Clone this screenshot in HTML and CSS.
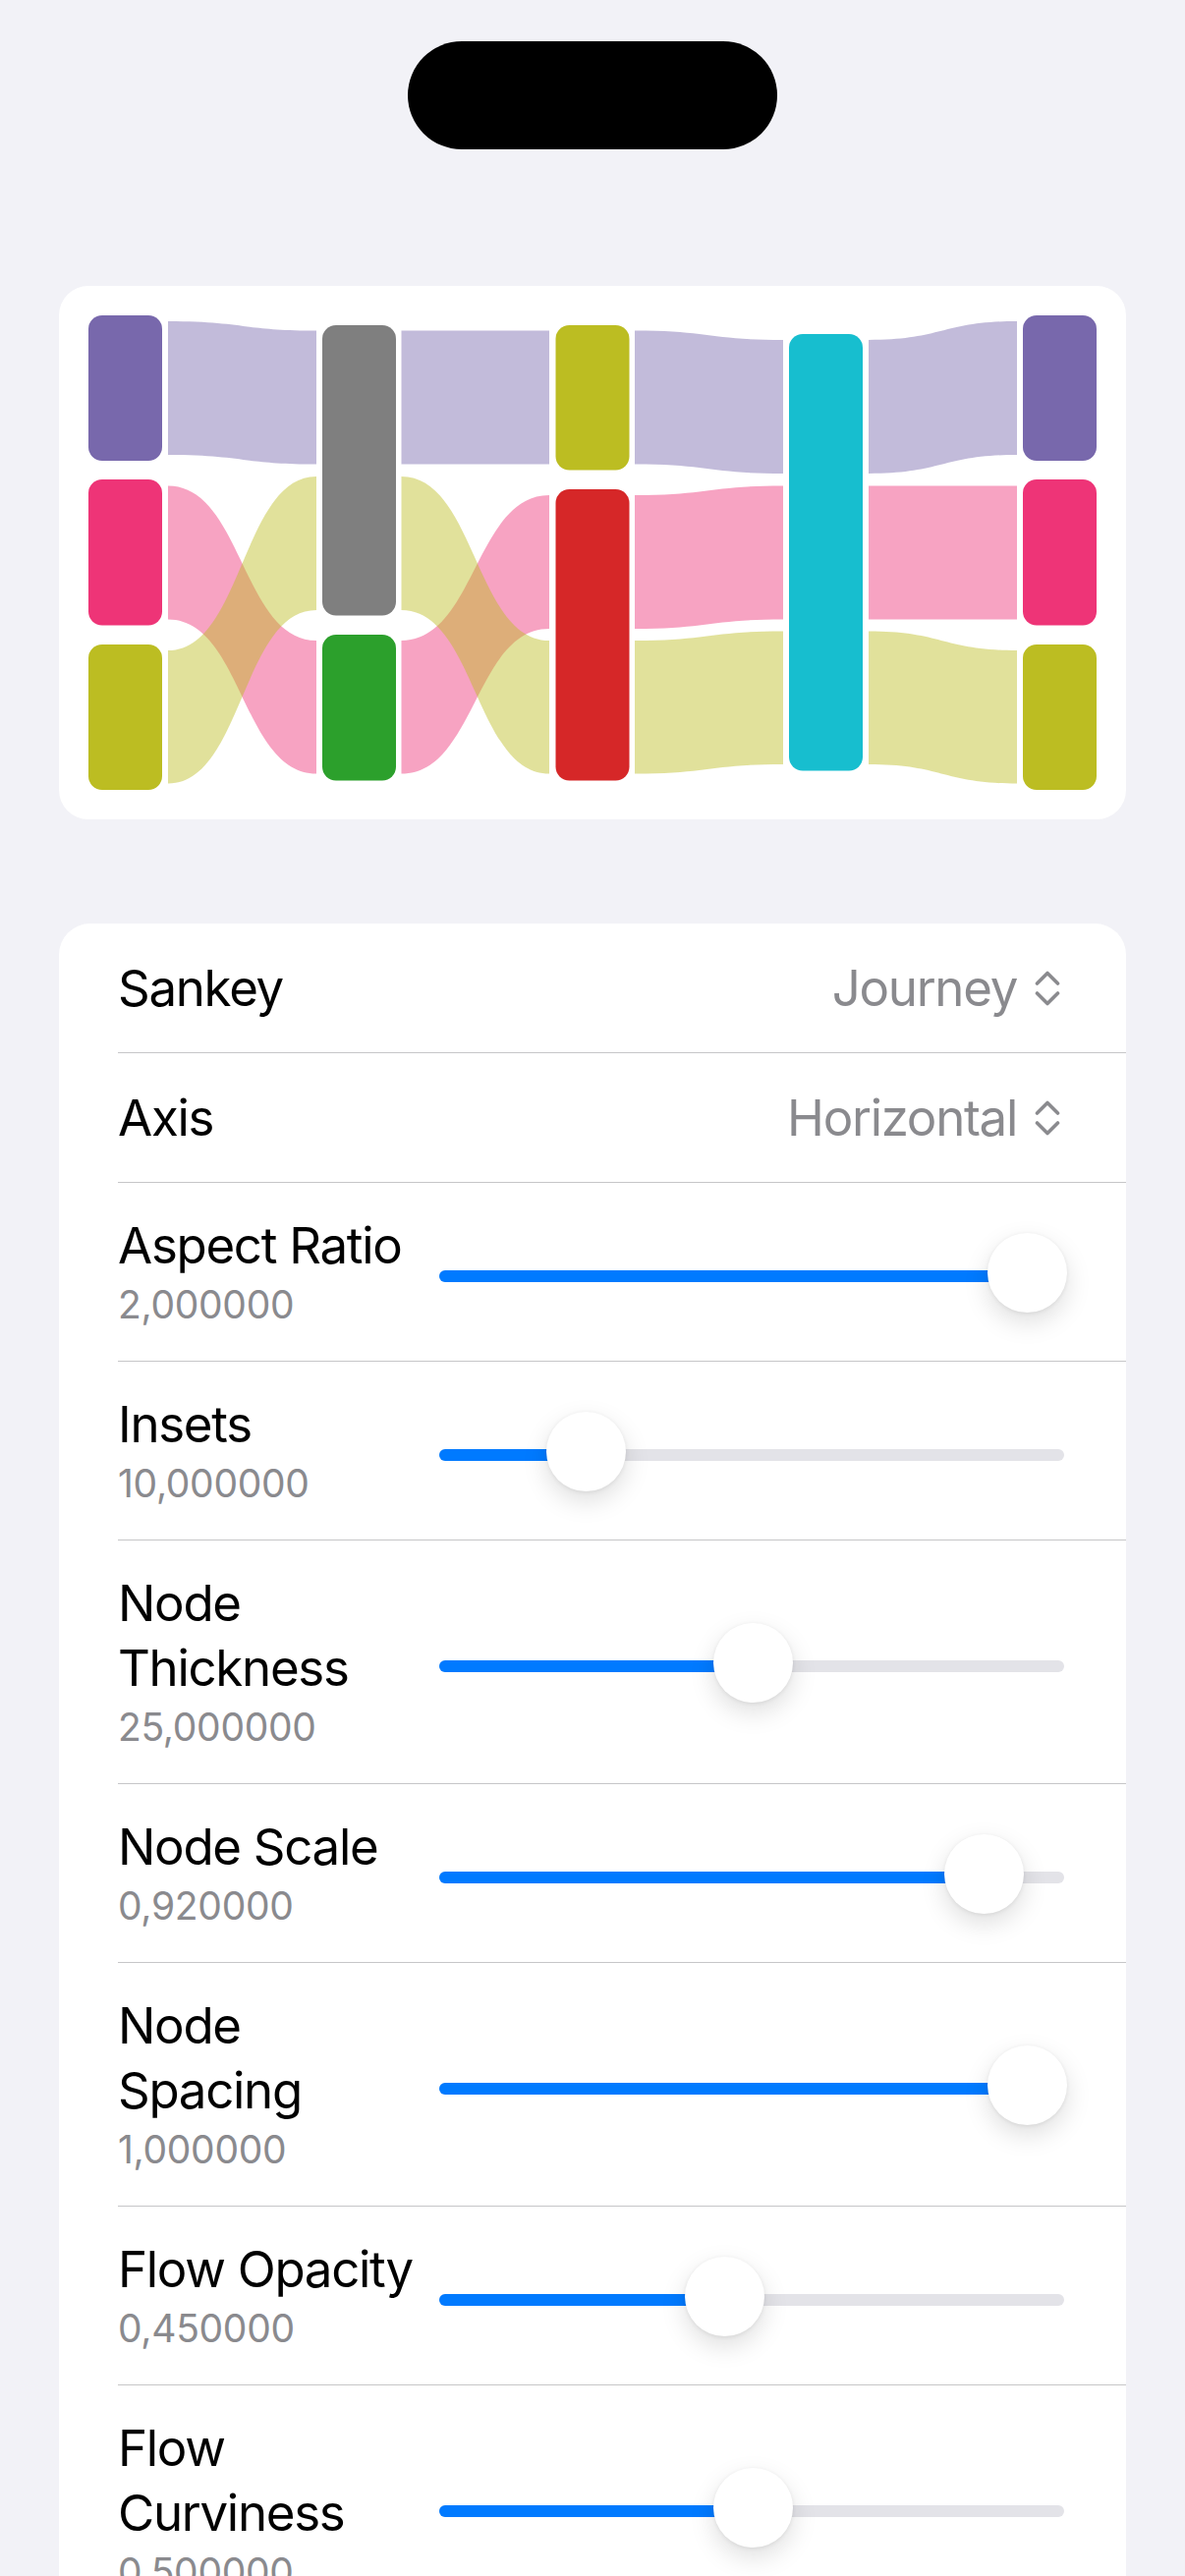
FILE: index.html
```html
<!DOCTYPE html>
<html lang="en">
<head>
<meta charset="utf-8">
<title>Sankey</title>
<link rel="stylesheet" href="styles.css">
</head>
<body>
<div class="island"></div>

<div class="chart-card">
  <svg class="sankey" width="1086" height="543" viewBox="60 291 1086 543" xmlns="http://www.w3.org/2000/svg">
    <g class="flows" fill-opacity="0.45">
      <!-- purple flows -->
      <path fill="#7868AC" d="M171 327 C246.5 327 246.5 336.5 322 336.5 L322 472.5 C246.5 472.5 246.5 463 171 463 Z"/>
      <path fill="#7868AC" d="M408.5 336.5 L559 336.5 L559 472.5 L408.5 472.5 Z"/>
      <path fill="#7868AC" d="M646 336.5 C721.5 336.5 721.5 346 797 346 L797 482 C721.5 482 721.5 472.5 646 472.5 Z"/>
      <path fill="#7868AC" d="M884 346 C959.5 346 959.5 327 1035 327 L1035 463 C959.5 463 959.5 482 884 482 Z"/>
      <!-- pink flows -->
      <path fill="#EE3477" d="M171 494.5 C246.5 494.5 246.5 652 322 652 L322 787.5 C246.5 787.5 246.5 630.5 171 630.5 Z"/>
      <path fill="#EE3477" d="M408.5 652 C483.75 652 483.75 504 559 504 L559 640 C483.75 640 483.75 787.5 408.5 787.5 Z"/>
      <path fill="#EE3477" d="M646 504 C721.5 504 721.5 494.5 797 494.5 L797 630.5 C721.5 630.5 721.5 640 646 640 Z"/>
      <path fill="#EE3477" d="M884 494.5 L1035 494.5 L1035 630.5 L884 630.5 Z"/>
      <!-- olive flows -->
      <path fill="#BCBD22" d="M171 662 C246.5 662 246.5 485 322 485 L322 621 C246.5 621 246.5 797.5 171 797.5 Z"/>
      <path fill="#BCBD22" d="M408.5 485 C483.75 485 483.75 652 559 652 L559 787.5 C483.75 787.5 483.75 621 408.5 621 Z"/>
      <path fill="#BCBD22" d="M646 652 C721.5 652 721.5 642.5 797 642.5 L797 778 C721.5 778 721.5 787.5 646 787.5 Z"/>
      <path fill="#BCBD22" d="M884 642.5 C959.5 642.5 959.5 662 1035 662 L1035 797.5 C959.5 797.5 959.5 778 884 778 Z"/>
    </g>
    <g class="nodes">
      <rect x="90" y="321" width="75" height="148" rx="14" fill="#7868AC"/>
      <rect x="90" y="488" width="75" height="148.5" rx="14" fill="#EE3477"/>
      <rect x="90" y="656" width="75" height="148" rx="14" fill="#BCBD22"/>

      <rect x="328" y="331" width="75" height="295.5" rx="14" fill="#7F7F7F"/>
      <rect x="328" y="646" width="75" height="148.5" rx="14" fill="#2CA02C"/>

      <rect x="565.5" y="331" width="75" height="147.5" rx="14" fill="#BCBD22"/>
      <rect x="565.5" y="498" width="75" height="296.5" rx="14" fill="#D62728"/>

      <rect x="803" y="340" width="75" height="444.5" rx="14" fill="#17BECF"/>

      <rect x="1041" y="321" width="75" height="148" rx="14" fill="#7868AC"/>
      <rect x="1041" y="488" width="75" height="148.5" rx="14" fill="#EE3477"/>
      <rect x="1041" y="656" width="75" height="148" rx="14" fill="#BCBD22"/>
    </g>
  </svg>
</div>

<div class="settings">
  <div class="row picker">
    <span class="label">Sankey</span>
    <span class="value">Journey
      <svg class="updown" width="26" height="36" viewBox="0 0 26 36" xmlns="http://www.w3.org/2000/svg"><polyline points="2.5,13 13,2.5 23.5,13"/><polyline points="2.5,23 13,33.5 23.5,23"/></svg>
    </span>
  </div>
  <div class="row picker">
    <span class="label">Axis</span>
    <span class="value">Horizontal
      <svg class="updown" width="26" height="36" viewBox="0 0 26 36" xmlns="http://www.w3.org/2000/svg"><polyline points="2.5,13 13,2.5 23.5,13"/><polyline points="2.5,23 13,33.5 23.5,23"/></svg>
    </span>
  </div>

  <div class="row slider-row">
    <div class="text"><div class="label">Aspect Ratio</div><div class="sub">2,000000</div></div>
    <div class="slider"><div class="track"><div class="fill" style="width:598px"></div></div><div class="thumb" style="left:558px"></div></div>
  </div>
  <div class="row slider-row">
    <div class="text"><div class="label">Insets</div><div class="sub">10,000000</div></div>
    <div class="slider"><div class="track"><div class="fill" style="width:149px"></div></div><div class="thumb" style="left:109px"></div></div>
  </div>
  <div class="row slider-row">
    <div class="text"><div class="label">Node<br>Thickness</div><div class="sub">25,000000</div></div>
    <div class="slider"><div class="track"><div class="fill" style="width:319px"></div></div><div class="thumb" style="left:279px"></div></div>
  </div>
  <div class="row slider-row">
    <div class="text"><div class="label">Node Scale</div><div class="sub">0,920000</div></div>
    <div class="slider"><div class="track"><div class="fill" style="width:554px"></div></div><div class="thumb" style="left:514px"></div></div>
  </div>
  <div class="row slider-row">
    <div class="text"><div class="label">Node<br>Spacing</div><div class="sub">1,000000</div></div>
    <div class="slider"><div class="track"><div class="fill" style="width:598px"></div></div><div class="thumb" style="left:558px"></div></div>
  </div>
  <div class="row slider-row">
    <div class="text"><div class="label">Flow Opacity</div><div class="sub">0,450000</div></div>
    <div class="slider"><div class="track"><div class="fill" style="width:290px"></div></div><div class="thumb" style="left:250px"></div></div>
  </div>
  <div class="row slider-row">
    <div class="text"><div class="label">Flow<br>Curviness</div><div class="sub">0,500000</div></div>
    <div class="slider"><div class="track"><div class="fill" style="width:319px"></div></div><div class="thumb" style="left:279px"></div></div>
  </div>
</div>
</body>
</html>
```

FILE: styles.css
```css
html, body {
  margin: 0;
  padding: 0;
}

body {
  background: #F2F2F7;
  font-family: Inter, "Noto Sans", "Liberation Sans", sans-serif;
  color: #000;
  height: 2622px;
  overflow: hidden;
}

.island {
  width: 376px;
  height: 110px;
  margin: 42px auto 0;
  background: #000;
  border-radius: 55px;
}

.chart-card {
  margin: 139px 60px 0;
  height: 543px;
  background: #fff;
  border-radius: 30px;
  overflow: hidden;
}

.sankey {
  display: block;
}

.settings {
  margin: 106px 60px 0;
  background: #fff;
  border-radius: 32px;
  padding-bottom: 40px;
}

.row {
  margin-left: 60px;
  border-bottom: 1px solid #C6C6C8;
}

.picker {
  height: 131px;
  display: flex;
  align-items: center;
  justify-content: space-between;
  padding-right: 67px;
}

.label {
  font-size: 51px;
  line-height: 66px;
  letter-spacing: -1.3px;
  white-space: nowrap;
}

.value {
  display: flex;
  align-items: center;
  gap: 18px;
  font-size: 51px;
  line-height: 66px;
  letter-spacing: -1.3px;
  color: #8A8A8E;
}

.updown {
  display: block;
  fill: none;
  stroke: #8A8A8E;
  stroke-width: 3.6;
  stroke-linecap: round;
  stroke-linejoin: round;
}

.slider-row {
  display: grid;
  grid-template-columns: 307px 636px;
  column-gap: 20px;
  align-items: center;
  padding: 31px 0 30px;
}

.sub {
  font-size: 39px;
  line-height: 54px;
  letter-spacing: -0.3px;
  color: #8A8A8E;
}

.slider {
  position: relative;
  height: 81px;
}

.track {
  position: absolute;
  left: 0;
  right: 0;
  top: 38px;
  height: 12px;
  border-radius: 6px;
  background: #E3E3E8;
  overflow: hidden;
}

.fill {
  height: 100%;
  background: #007AFF;
}

.thumb {
  position: absolute;
  top: 0;
  width: 81px;
  height: 81px;
  border-radius: 50%;
  background: #fff;
  box-shadow: 0 10px 26px rgba(0, 0, 0, 0.13), 0 1px 4px rgba(0, 0, 0, 0.08);
}
```
